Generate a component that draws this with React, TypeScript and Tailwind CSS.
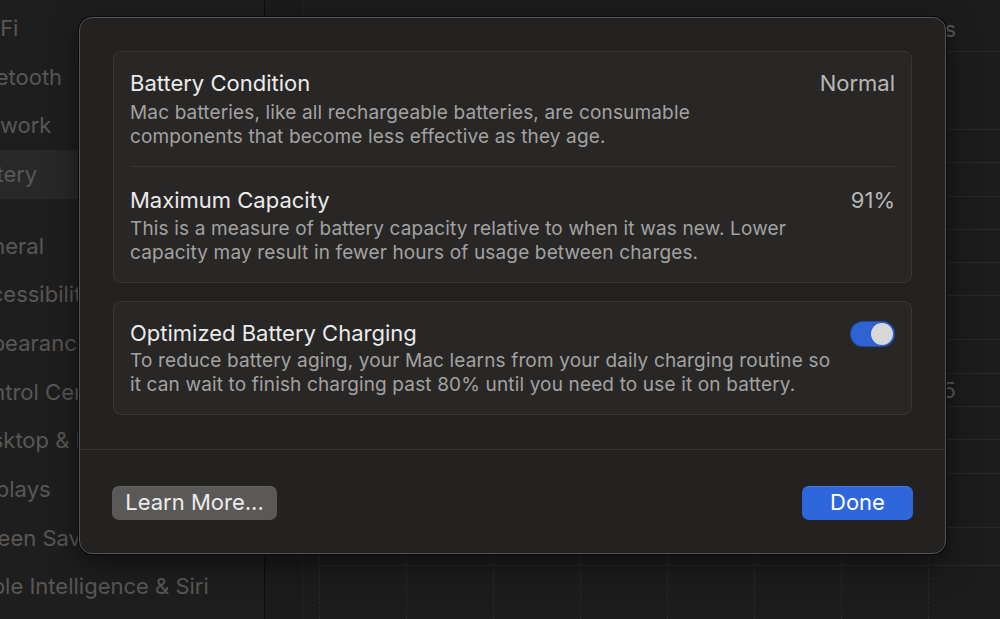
import * as React from "react";

const sideItems = [
	{ label: "Wi-Fi", gap: false },
	{ label: "Bluetooth", gap: false },
	{ label: "Network", gap: false },
	{ label: "Battery", gap: false, active: true },
	{ label: "General", gap: true },
	{ label: "Accessibility", gap: false },
	{ label: "Appearance", gap: false },
	{ label: "Control Centre", gap: false },
	{ label: "Desktop & Dock", gap: false },
	{ label: "Displays", gap: false },
	{ label: "Screen Saver", gap: false },
	{ label: "Apple Intelligence & Siri", gap: false },
];

const rowHeights = [52, 78, 33, 34, 33, 33, 33, 44, 34, 33, 33, 34, 54];

function Toggle() {
	return (
		<div className="flex h-[26px] w-[45px] shrink-0 items-center justify-end rounded-full bg-[#2f62d2] p-[2px] shadow-[inset_0_0_0_1px_rgba(0,0,0,0.25)]">
			<div className="h-[22px] w-[22px] rounded-full bg-[#d8d8d8]" />
		</div>
	);
}

export default function App() {
	return (
		<div className="relative flex h-[619px] w-[1000px] overflow-hidden bg-[#1c1b1b] font-['Inter','Noto_Sans',sans-serif]">
			{/* sidebar behind the sheet */}
			<div className="flex h-full w-[265px] shrink-0 flex-col border-r border-[#0e0e0e] bg-[#1f1e1e] pt-[4px]">
				{sideItems.map((item) => (
					<div
						key={item.label}
						className={`flex h-[48.7px] shrink-0 items-center whitespace-nowrap text-[22px] text-[#585756] ${item.gap ? "mt-[23px]" : ""} ${item.active ? "bg-[#292828]" : ""}`}
					>
						<span className="-ml-[37px]">{item.label}</span>
					</div>
				))}
			</div>

			{/* main pane behind the sheet */}
			<div className="flex min-w-0 flex-1 flex-col overflow-hidden pl-[37px]">
				<div className="flex flex-1 flex-col border-l border-[#232222] bg-[#1d1c1c]">
					{rowHeights.map((h, i) => (
						<div
							key={i}
							style={{ height: h }}
							className={`flex shrink-0 justify-end border-b border-[#2a2929] pr-[44px] text-[22px] text-[#5a5958] ${i === 0 ? "items-end pb-[5px]" : "items-center"}`}
						>
							{i === 0 ? "Options" : i === 9 ? "25" : ""}
						</div>
					))}
					<div className="flex flex-1 pl-[16px]">
						{Array.from({ length: 8 }).map((_, i) => (
							<div key={i} className="flex w-[87px] shrink-0 flex-col border-l border-dashed border-[#2c2b2b]">
								<div className="h-[38px] border-b border-[#2a2929]" />
							</div>
						))}
					</div>
				</div>
			</div>

			{/* sheet */}
			<div className="absolute left-[79px] top-[17px] flex h-[537px] w-[867px] flex-col rounded-[13px] border border-[#555453] bg-[#232221] shadow-[0_0_0_1px_#0b0b0b,0_10px_30px_rgba(0,0,0,0.5)]">
				<div className="flex flex-col gap-[18px] px-[33px] pt-[33px]">
					<div className="rounded-[8px] border border-[#393837] bg-[#282726] px-[16px] pb-[17px] pt-[19px]">
						<div className="flex items-start justify-between">
							<div className="flex flex-col">
								<div className="text-[22px] leading-[24px] text-[#ebebeb]">Battery Condition</div>
								<div className="mt-[6px] text-[19px] leading-[24px] tracking-[0.15px] text-[#a3a2a1]">
									Mac batteries, like all rechargeable batteries, are consumable
									<br />
									components that become less effective as they age.
								</div>
							</div>
							<div className="text-[22px] leading-[24px] text-[#b8b7b6]">Normal</div>
						</div>
						<div className="mb-[21px] mt-[17px] h-px bg-[#363534]" />
						<div className="flex items-start justify-between">
							<div className="flex flex-col">
								<div className="text-[22px] leading-[24px] text-[#ebebeb]">Maximum Capacity</div>
								<div className="mt-[5px] text-[19px] leading-[24px] tracking-[0.15px] text-[#a3a2a1]">
									This is a measure of battery capacity relative to when it was new. Lower
									<br />
									capacity may result in fewer hours of usage between charges.
								</div>
							</div>
							<div className="text-[22px] leading-[24px] text-[#b8b7b6]">91%</div>
						</div>
					</div>

					<div className="flex items-start justify-between rounded-[8px] border border-[#393837] bg-[#282726] px-[16px] pb-[17px] pt-[19px]">
						<div className="flex flex-col">
							<div className="text-[22px] leading-[24px] text-[#ebebeb]">Optimized Battery Charging</div>
							<div className="mt-[4px] text-[19px] leading-[24px] tracking-[0.15px] text-[#a3a2a1]">
								To reduce battery aging, your Mac learns from your daily charging routine so
								<br />
								it can wait to finish charging past 80% until you need to use it on battery.
							</div>
						</div>
						<Toggle />
					</div>
				</div>

				<div className="mt-auto flex h-[104px] items-center justify-between border-t border-[#383736] px-[32px] pt-[2px]">
					<button className="h-[34px] w-[165px] rounded-[7px] bg-[#5a5958] text-[22px] text-[#ececec] shadow-[inset_0_1px_0_rgba(255,255,255,0.08)]">
						Learn More...
					</button>
					<button className="h-[34px] w-[111px] rounded-[7px] bg-[#2d67db] text-[22px] text-white shadow-[inset_0_1px_0_rgba(255,255,255,0.12)]">
						Done
					</button>
				</div>
			</div>
		</div>
	);
}
